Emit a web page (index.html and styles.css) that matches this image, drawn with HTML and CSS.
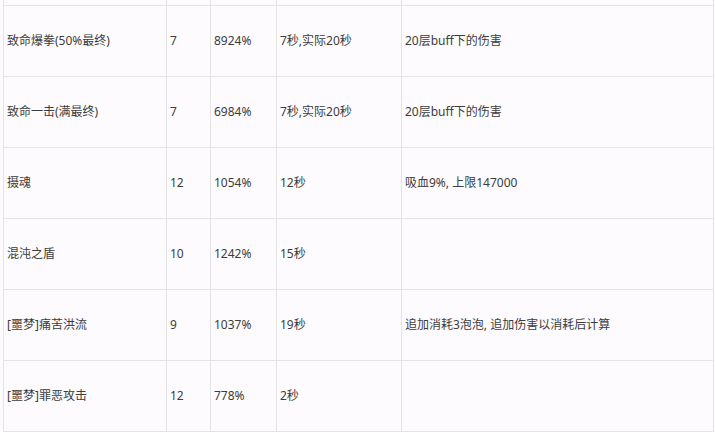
FILE: index.html
```html
<!DOCTYPE html>
<html lang="zh-CN">
<head>
<meta charset="utf-8">
<title>技能伤害表</title>
<link rel="stylesheet" href="styles.css">
</head>
<body>
<div class="table">
  <div class="cell top"></div><div class="cell top"></div><div class="cell top"></div><div class="cell top"></div><div class="cell top"></div>

  <div class="cell">致命爆拳(50%最终)</div><div class="cell">7</div><div class="cell">8924%</div><div class="cell">7秒,实际20秒</div><div class="cell">20层buff下的伤害</div>

  <div class="cell">致命一击(满最终)</div><div class="cell">7</div><div class="cell">6984%</div><div class="cell">7秒,实际20秒</div><div class="cell">20层buff下的伤害</div>

  <div class="cell">摄魂</div><div class="cell">12</div><div class="cell">1054%</div><div class="cell">12秒</div><div class="cell">吸血9%, 上限147000</div>

  <div class="cell">混沌之盾</div><div class="cell">10</div><div class="cell">1242%</div><div class="cell">15秒</div><div class="cell"></div>

  <div class="cell">[噩梦]痛苦洪流</div><div class="cell">9</div><div class="cell">1037%</div><div class="cell">19秒</div><div class="cell">追加消耗3泡泡, 追加伤害以消耗后计算</div>

  <div class="cell">[噩梦]罪恶攻击</div><div class="cell">12</div><div class="cell">778%</div><div class="cell">2秒</div><div class="cell"></div>
</div>
</body>
</html>
```
FILE: styles.css
```css
html, body {
  margin: 0;
  padding: 0;
  background: #fdfbfd;
}
body {
  font-family: "Noto Sans", "Noto Sans CJK SC", sans-serif;
  font-size: 12px;
  color: #3c3c3c;
  overflow: hidden;
}
.table {
  margin-left: 3px;
  display: grid;
  grid-template-columns: 163px 44px 66px 125px 312px;
  grid-template-rows: 6px;
  grid-auto-rows: 71px;
  border-left: 1px solid #e4e3e8;
  width: max-content;
}
.cell {
  box-sizing: border-box;
  border-right: 1px solid #e4e3e8;
  border-bottom: 1px solid #e4e3e8;
  padding: 0 3px;
  display: flex;
  align-items: center;
  white-space: nowrap;
  line-height: 16px;
}
```
